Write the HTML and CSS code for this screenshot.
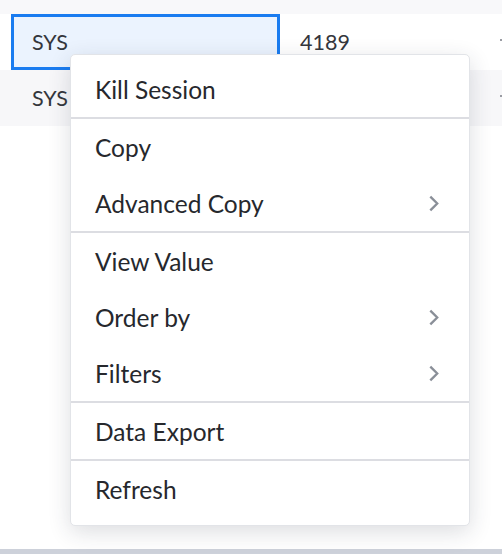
FILE: index.html
```html
<!DOCTYPE html>
<html>
<head>
<meta charset="utf-8">
<link rel="stylesheet" href="styles.css">
</head>
<body>
<div class="page">
  <div class="topstrip"></div>
  <div class="row row-white">
    <div class="cell cell-first selected">SYS</div>
    <div class="cell cell-second">4189</div>
    <div class="cell cell-third"><span class="tick"></span></div>
  </div>
  <div class="row row-gray">
    <div class="cell cell-first">SYS</div>
    <div class="cell cell-second">4190</div>
    <div class="cell cell-third"><span class="tick"></span></div>
  </div>
  <div class="filler"></div>
  <div class="bottombar"></div>

  <div class="menu">
    <div class="group">
      <div class="item">Kill Session</div>
    </div>
    <div class="group">
      <div class="item">Copy</div>
      <div class="item">Advanced Copy<svg class="chev" viewBox="0 0 10 16"><polyline points="2,1.5 8.5,8 2,14.5"/></svg></div>
    </div>
    <div class="group">
      <div class="item">View Value</div>
      <div class="item">Order by<svg class="chev" viewBox="0 0 10 16"><polyline points="2,1.5 8.5,8 2,14.5"/></svg></div>
      <div class="item">Filters<svg class="chev" viewBox="0 0 10 16"><polyline points="2,1.5 8.5,8 2,14.5"/></svg></div>
    </div>
    <div class="group">
      <div class="item">Data Export</div>
    </div>
    <div class="group">
      <div class="item">Refresh</div>
    </div>
  </div>
</div>
</body>
</html>
```
FILE: styles.css
```css
html, body {
  margin: 0;
  padding: 0;
}
body {
  font-family: Lato, "Noto Sans", sans-serif;
  color: #2e3036;
}
.page {
  position: relative;
  width: 502px;
  height: 554px;
  overflow: hidden;
  display: flex;
  flex-direction: column;
  background: #ffffff;
}
.topstrip {
  height: 14px;
  background: #f8f8fa;
  flex: none;
}
.row {
  height: 56px;
  flex: none;
  display: flex;
  align-items: stretch;
}
.row-white { background: #ffffff; }
.row-gray { background: #f7f7f9; }
.cell {
  display: flex;
  align-items: center;
  font-size: 21.5px;
  color: #34363c;
  box-sizing: border-box;
  flex: none;
}
.cell-first {
  width: 269px;
  margin-left: 11px;
  padding-left: 21px;
}
.cell-second {
  width: 220px;
  padding-left: 20px;
}
.cell-third {
  width: 20px;
}
.tick {
  display: block;
  width: 4px;
  height: 2px;
  margin-bottom: 4px;
  background: #9a9ca3;
}
.selected {
  border: 3px solid #1a7cf0;
  background: #ebf3fe;
  padding-left: 18px;
}
.filler {
  flex: 1;
}
.bottombar {
  height: 5px;
  flex: none;
  background: #cdd1da;
}
.menu {
  position: absolute;
  left: 70px;
  top: 54px;
  width: 400px;
  box-sizing: border-box;
  background: #ffffff;
  border: 1px solid #e2e4e8;
  border-radius: 5px;
  box-shadow: 0 6px 22px rgba(40, 45, 60, 0.16);
  padding: 6px 0 8px;
}
.group + .group {
  border-top: 2px solid #dcdde2;
}
.item {
  height: 56px;
  display: flex;
  align-items: center;
  justify-content: space-between;
  padding: 0 30px 0 24px;
  font-size: 24.5px;
  color: #26282d;
}
.chev {
  width: 11px;
  height: 17px;
  fill: none;
  stroke: #8a8f98;
  stroke-width: 2.2;
}
```
